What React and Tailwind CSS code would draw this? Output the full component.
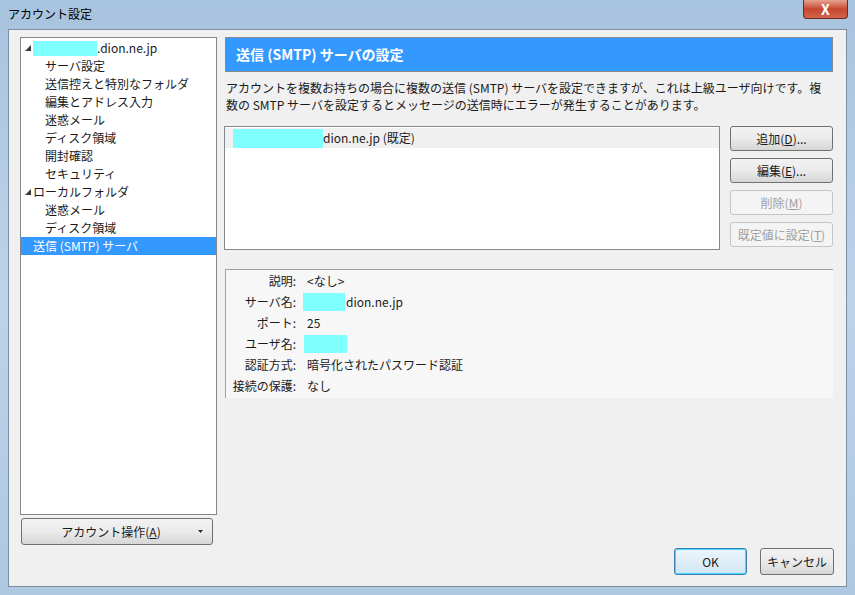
import React from 'react';

const treeItems = [
  { label: '.dion.ne.jp', level: 0, mask: true },
  { label: 'サーバ設定', level: 1 },
  { label: '送信控えと特別なフォルダ', level: 1 },
  { label: '編集とアドレス入力', level: 1 },
  { label: '迷惑メール', level: 1 },
  { label: 'ディスク領域', level: 1 },
  { label: '開封確認', level: 1 },
  { label: 'セキュリティ', level: 1 },
  { label: 'ローカルフォルダ', level: 0 },
  { label: '迷惑メール', level: 1 },
  { label: 'ディスク領域', level: 1 },
  { label: '送信 (SMTP) サーバ', level: 0, selected: true, leaf: true },
];

function Triangle() {
  return (
    <svg width="8" height="8" viewBox="0 0 8 8" className="shrink-0">
      <path d="M7 1 L7 7 L1 7 Z" fill="#3a3a3a" />
    </svg>
  );
}

function Mask({ className }) {
  return <span className={`inline-block bg-[#80ffff] ${className}`} />;
}

function SideButton({ children, disabled }) {
  return (
    <button
      className={`h-[25px] w-[103px] rounded-[3px] border text-[12px] ${
        disabled
          ? 'border-[#c5c5c5] bg-[#f4f4f4] text-[#a0a0a0]'
          : 'border-[#707070] bg-gradient-to-b from-[#f2f2f2] via-[#ebebeb] to-[#d6d6d6] text-[#1a1a1a]'
      }`}
    >
      {children}
    </button>
  );
}

function DetailRow({ label, children }) {
  return (
    <div className="flex h-[21px] items-center">
      <div className="w-[72px] pr-[2px] text-right">{label}:</div>
      <div className="ml-[9px] flex items-center">{children}</div>
    </div>
  );
}

export default function App() {
  return (
    <div
      className="flex h-[595px] w-[855px] flex-col bg-gradient-to-b from-[#a8c3de] via-[#bcd3ea] to-[#aec8e2] px-[8px] pb-[8px] text-[12px] text-[#1a1a1a]"
      style={{ fontFamily: '"Noto Sans CJK JP", "Noto Sans", sans-serif' }}
    >
      {/* Title bar */}
      <div className="flex h-[29px] shrink-0 items-start justify-between">
        <div className="mt-[5px] text-[12px] text-black">アカウント設定</div>
        <div className="mr-[-1px] flex h-[19px] w-[45px] items-center justify-center rounded-b-[4px] border border-t-0 border-[#6b2a22] bg-gradient-to-b from-[#e5a190] via-[#c7462f] to-[#d1634b] text-[14px] font-bold leading-none text-white">
          X
        </div>
      </div>

      {/* Client area */}
      <div className="flex flex-1 border border-[#7d8ea1] bg-[#f0f0f0] pl-[11px] pr-[12px] pt-[7px] pb-[11px]">
        {/* Left column */}
        <div className="flex w-[197px] shrink-0 flex-col">
          <div className="h-[478px] border border-[#828790] bg-white pt-[1px]">
            {treeItems.map((item, i) => (
              <div
                key={i}
                className={`flex h-[18px] items-center ${
                  item.selected ? 'bg-[#3399ff] text-white' : ''
                }`}
              >
                {item.level === 0 ? (
                  <div className="flex items-center pl-[3px]">
                    <span className="w-[9px]">{!item.leaf && <Triangle />}</span>
                    {item.mask && <Mask className="h-[15px] w-[64px]" />}
                    <span>{item.label}</span>
                  </div>
                ) : (
                  <span className="pl-[24px]">{item.label}</span>
                )}
              </div>
            ))}
          </div>
          <button className="ml-[1px] mt-[3px] flex h-[27px] w-[192px] items-center rounded-[3px] border border-[#707070] bg-gradient-to-b from-[#f2f2f2] via-[#ebebeb] to-[#d6d6d6] text-[12px]">
            <span className="flex-1 pl-[12px] text-center">
              アカウント操作(<span className="underline">A</span>)
            </span>
            <span className="flex w-[24px] justify-center">
              <svg width="5" height="3" viewBox="0 0 5 3">
                <path d="M0 0 L5 0 L2.5 3 Z" fill="#303030" />
              </svg>
            </span>
          </button>
        </div>

        {/* Right column */}
        <div className="ml-[7px] flex flex-1 flex-col">
          <div className="ml-[1px] mr-[1px] flex h-[35px] items-center border border-[#8a8a8a] bg-[#3399ff] pl-[10px] text-[14px] font-bold text-white">
            送信 (SMTP) サーバの設定
          </div>
          <p className="mt-[7px] pl-[2px] leading-[17px]">
            アカウントを複数お持ちの場合に複数の送信 (SMTP) サーバを設定できますが、これは上級ユーザ向けです。複
            <br />
            数の SMTP サーバを設定するとメッセージの送信時にエラーが発生することがあります。
          </p>

          <div className="mt-[13px] flex">
            <div className="h-[124px] w-[496px] border border-[#828790] bg-white pt-[1px]">
              <div className="flex h-[20px] items-center bg-[#f0f0f0] pl-[8px]">
                <Mask className="h-[19px] w-[90px]" />
                <span>dion.ne.jp (既定)</span>
              </div>
            </div>
            <div className="ml-[10px] flex flex-col gap-[7px]">
              <SideButton>
                追加(<span className="underline">D</span>)...
              </SideButton>
              <SideButton>
                編集(<span className="underline">E</span>)...
              </SideButton>
              <SideButton disabled>
                削除(<span className="underline">M</span>)
              </SideButton>
              <SideButton disabled>
                既定値に設定(<span className="underline">T</span>)
              </SideButton>
            </div>
          </div>

          <div className="ml-[1px] mr-[1px] mt-[19px] h-[129px] border-l border-t border-[#a0a0a0] bg-[#f7f7f7]">
            <DetailRow label="説明">&lt;なし&gt;</DetailRow>
            <DetailRow label="サーバ名">
              <Mask className="ml-[-4px] mr-[1px] h-[18px] w-[42px]" />
              dion.ne.jp
            </DetailRow>
            <DetailRow label="ポート">25</DetailRow>
            <DetailRow label="ユーザ名">
              <Mask className="ml-[-3px] h-[18px] w-[43px]" />
            </DetailRow>
            <DetailRow label="認証方式">暗号化されたパスワード認証</DetailRow>
            <DetailRow label="接続の保護">なし</DetailRow>
          </div>

          <div className="mt-auto flex justify-end gap-[13px]">
            <button className="h-[27px] w-[73px] rounded-[3px] border border-[#3c7fb1] bg-gradient-to-b from-[#eaf6fd] via-[#e0eef8] to-[#cfe6f5] text-[12px] shadow-[inset_0_0_0_1px_#48d8ff]">
              OK
            </button>
            <button className="h-[27px] w-[74px] rounded-[3px] border border-[#707070] bg-gradient-to-b from-[#f2f2f2] via-[#ebebeb] to-[#d6d6d6] text-[12px]">
              キャンセル
            </button>
          </div>
        </div>
      </div>
    </div>
  );
}
